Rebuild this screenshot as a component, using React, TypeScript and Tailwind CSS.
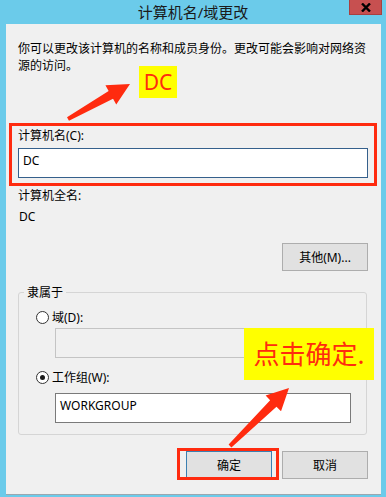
import React from "react";

type Pt = [number, number];

// filled arrow polygon from tail to tip, slight taper on the shaft
function arrowPoints(tail: Pt, tip: Pt) {
  const dx = tip[0] - tail[0];
  const dy = tip[1] - tail[1];
  const len = Math.hypot(dx, dy);
  const ux = dx / len;
  const uy = dy / len;
  const nx = -uy;
  const ny = ux;
  const headLen = 22;
  const headW = 11;
  const tailW = 2;
  const neckW = 4.5;
  const bx = tip[0] - ux * headLen;
  const by = tip[1] - uy * headLen;
  const pts: Pt[] = [
    [tail[0] + nx * tailW, tail[1] + ny * tailW],
    [bx + nx * neckW, by + ny * neckW],
    [bx + nx * headW, by + ny * headW],
    tip,
    [bx - nx * headW, by - ny * headW],
    [bx - nx * neckW, by - ny * neckW],
    [tail[0] - nx * tailW, tail[1] - ny * tailW],
  ];
  return pts.map((p) => p.join(",")).join(" ");
}

function Radio({ checked, label }: { checked?: boolean; label: string }) {
  return (
    <div className="flex items-center gap-[3px] pl-[17px] h-[17px]">
      <span className="w-[13px] h-[13px] rounded-full border border-[#333] bg-white flex items-center justify-center">
        {checked && <span className="w-[5px] h-[5px] rounded-full bg-[#1a1a1a]" />}
      </span>
      <span>{label}</span>
    </div>
  );
}

function Button({ label, primary }: { label: string; primary?: boolean }) {
  return (
    <div
      className={
        "w-[86px] h-[28px] flex items-center justify-center bg-[#e1e1e1] border " +
        (primary ? "border-[#3c7fb1]" : "border-[#adadad]")
      }
    >
      {label}
    </div>
  );
}

export default function App() {
  return (
    <div
      className="relative w-[386px] h-[497px] bg-[#6bcbea] overflow-hidden text-[12px] leading-[17px] text-black"
      style={{ fontFamily: '"Noto Sans", "Noto Sans CJK SC", sans-serif' }}
    >
      {/* title bar */}
      <div className="h-[24px] grid grid-cols-[1fr_auto_1fr] items-start">
        <div />
        <div className="text-[15px] leading-[24px] text-[#1a1a1a]">计算机名/域更改</div>
        <div className="justify-self-end mr-[4px] w-[33px] h-[15px] bg-[#c75050] border border-[#a84040] border-t-0 flex items-center justify-center">
          <svg width="10" height="9" viewBox="0 0 10 9">
            <path d="M1 0.5 L9 8.5 M9 0.5 L1 8.5" stroke="#000" strokeWidth="2.4" />
          </svg>
        </div>
      </div>

      {/* client area */}
      <div className="ml-[6px] mr-[5px] h-[471px] bg-[#f0f0f0] border-b border-[#9aa7b0] px-[12px] pt-[16px]">
        <p className="w-[350px]">
          你可以更改该计算机的名称和成员身份。更改可能会影响对网络资
          <br />
          源的访问。
        </p>

        <div className="mt-[53px]">计算机名(C):</div>
        <div className="mt-[4px] w-[350px] h-[30px] bg-white border border-[#35608c] px-[4px] pt-[3px]">DC</div>

        <div className="mt-[9px]">计算机全名:</div>
        <div className="mt-[4px] pl-[1px]">DC</div>

        <div className="mt-[18px] w-[350px] flex justify-end">
          <Button label="其他(M)..." />
        </div>

        <div className="mt-[21px] w-[349px] h-[143px] border border-[#d5d5d5] rounded-[3px]">
          <div className="-mt-[9px] ml-[5px] px-[3px] w-fit bg-[#f0f0f0]">隶属于</div>
          <div className="mt-[8px]">
            <Radio label="域(D):" />
          </div>
          <div className="mt-[2px] ml-[36px] w-[296px] h-[30px] border border-[#c4c4c4] bg-[#f0f0f0]" />
          <div className="mt-[11px]">
            <Radio checked label="工作组(W):" />
          </div>
          <div className="mt-[7px] ml-[36px] w-[296px] h-[30px] bg-white border border-[#7a7a7a] px-[4px] pt-[3px]">
            WORKGROUP
          </div>
        </div>

        <div className="mt-[16px] w-[350px] flex justify-end gap-[10px]">
          <Button label="确定" primary />
          <Button label="取消" />
        </div>
      </div>

      {/* annotations */}
      <div className="absolute left-[139px] top-[66px] w-[38px] h-[32px] bg-[#ffff00] flex items-center justify-center text-[21px] text-[#ff2b0f]">
        DC
      </div>
      <div className="absolute left-[9px] top-[123px] w-[368px] h-[63px] border-[3px] border-[#ff2b0f]" />
      <div className="absolute left-[244px] top-[328px] w-[130px] h-[52px] bg-[#ffff00] flex items-center justify-center text-[26px] leading-[30px] text-[#ff2b0f]">
        点击确定.
      </div>
      <div className="absolute left-[177px] top-[448px] w-[102px] h-[32px] border-[3px] border-[#ff2b0f]" />
      <svg className="absolute left-0 top-0 pointer-events-none" width="386" height="497">
        <polygon points={arrowPoints([68, 119], [130, 84])} fill="#ff2b0f" />
        <polygon points={arrowPoints([230, 446], [289, 388])} fill="#ff2b0f" />
      </svg>
    </div>
  );
}
